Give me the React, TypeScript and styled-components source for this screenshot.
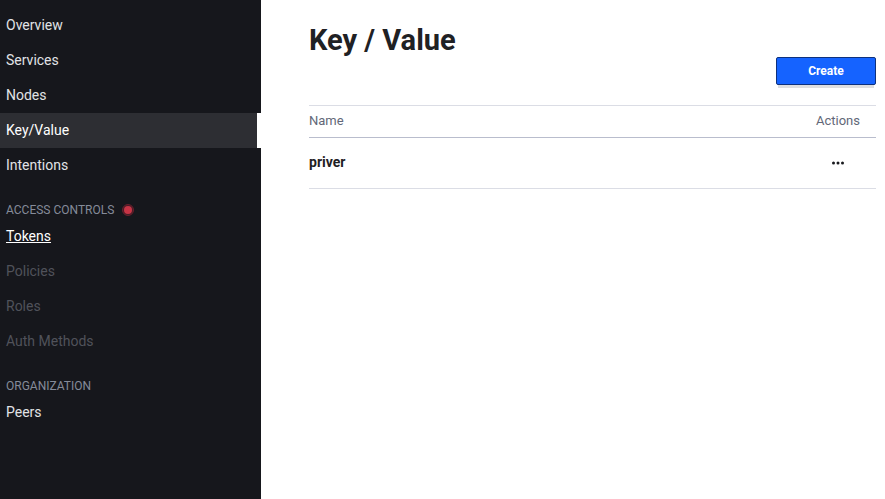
import React from 'react';
import styled, { createGlobalStyle, css } from 'styled-components';

const GlobalStyle = createGlobalStyle`
  *, *::before, *::after { box-sizing: border-box; }
  body { margin: 0; background: #fff; font-family: Roboto, sans-serif; color: #1f2124; }
`;

const Layout = styled.div`
  display: grid;
  grid-template-columns: 261px 1fr;
  min-height: 100vh;
`;

const Sidebar = styled.nav`
  background: #16171c;
  padding: 8px 0;
  font-size: 14px;
`;

const NavList = styled.ul`
  list-style: none;
  margin: 0;
  padding: 0;
`;

const itemStyle = css`
  display: block;
  height: 35px;
  padding: 0 6px;
  line-height: 35px;
`;

const NavLink = styled.a<{ $underlined?: boolean }>`
  ${itemStyle}
  color: ${(p) => (p.$underlined ? '#fff' : '#e1e3e6')};
  text-decoration: ${(p) => (p.$underlined ? 'underline' : 'none')};
  &[aria-current='page'] {
    background: #2d2e33;
    border-right: 4px solid #fff;
    color: #fff;
  }
`;

const DisabledItem = styled.span`
  ${itemStyle}
  color: #50525a;
`;

const SectionLabel = styled.h2`
  display: flex;
  align-items: center;
  gap: 8px;
  margin: 18px 0 0;
  padding: 0 6px;
  font-size: 12px;
  line-height: 18px;
  font-weight: 400;
  text-transform: uppercase;
  color: #858b9a;
`;

const Status = styled.svg`
  display: block;
  width: 12px;
  height: 12px;
`;

const Main = styled.main`
  padding: 20px 9px 0 48px;
`;

const Header = styled.header`
  display: flex;
  justify-content: space-between;
  align-items: flex-end;
  height: 65px;
  margin-bottom: 20px;
`;

const Title = styled.h1`
  align-self: flex-start;
  margin: 0;
  font-size: 29px;
  line-height: 40px;
  font-weight: 700;
`;

const CreateButton = styled.button`
  width: 100px;
  height: 28px;
  padding: 0;
  border: 1px solid #0e317d;
  border-radius: 2px;
  background: #1563ff;
  box-shadow: 0 5px 0 -2px #dedfe1;
  color: #fff;
  font: 700 12px/26px Roboto, sans-serif;
`;

const Table = styled.table`
  width: 100%;
  border-collapse: collapse;
  border-top: 1px solid #dbdde5;
`;

const HeadCell = styled.th<{ $actions?: boolean }>`
  height: 32px;
  width: ${(p) => (p.$actions ? '60px' : 'auto')};
  padding: 0 0 2px;
  border-bottom: 1px solid #b9bdcd;
  text-align: left;
  font-size: 13px;
  font-weight: 400;
  color: #626778;
`;

const Cell = styled.td`
  height: 51px;
  padding: 0;
  border-bottom: 1px solid #dbdde5;
`;

const KeyLink = styled.a`
  display: block;
  padding-bottom: 3px;
  color: inherit;
  font-size: 14px;
  line-height: 20px;
  font-weight: 700;
  text-decoration: none;
`;

const MoreButton = styled.button`
  display: flex;
  align-items: center;
  justify-content: center;
  width: 44px;
  height: 32px;
  padding: 0;
  border: 0;
  background: none;
  color: #18191d;
`;

const nav = ['Overview', 'Services', 'Nodes', 'Key/Value', 'Intentions'];
const disabled = ['Policies', 'Roles', 'Auth Methods'];

export default function App() {
  return (
    <Layout>
      <GlobalStyle />
      <Sidebar aria-label="Main">
        <NavList>
          {nav.map((label) => (
            <li key={label}>
              <NavLink href="#" aria-current={label === 'Key/Value' ? 'page' : undefined}>{label}</NavLink>
            </li>
          ))}
        </NavList>
        <SectionLabel>
          Access Controls
          <Status viewBox="0 0 12 12" aria-hidden="true">
            <circle cx="6" cy="6" r="5.5" fill="#461d27" stroke="#6a1f2c" />
            <circle cx="6" cy="6" r="4" fill="#c73445" />
          </Status>
        </SectionLabel>
        <NavList>
          <li><NavLink href="#" $underlined>Tokens</NavLink></li>
          {disabled.map((label) => (
            <li key={label}><DisabledItem>{label}</DisabledItem></li>
          ))}
        </NavList>
        <SectionLabel>Organization</SectionLabel>
        <NavList>
          <li><NavLink href="#">Peers</NavLink></li>
        </NavList>
      </Sidebar>
      <Main>
        <Header>
          <Title>Key / Value</Title>
          <CreateButton type="button">Create</CreateButton>
        </Header>
        <Table>
          <thead>
            <tr>
              <HeadCell scope="col">Name</HeadCell>
              <HeadCell scope="col" $actions>Actions</HeadCell>
            </tr>
          </thead>
          <tbody>
            <tr>
              <Cell><KeyLink href="#">priver</KeyLink></Cell>
              <Cell>
                <MoreButton type="button" aria-label="More">
                  <svg width="12" height="4" viewBox="0 0 12 4" fill="currentColor" aria-hidden="true">
                    <circle cx="1.5" cy="2" r="1.5" />
                    <circle cx="6" cy="2" r="1.5" />
                    <circle cx="10.5" cy="2" r="1.5" />
                  </svg>
                </MoreButton>
              </Cell>
            </tr>
          </tbody>
        </Table>
      </Main>
    </Layout>
  );
}
